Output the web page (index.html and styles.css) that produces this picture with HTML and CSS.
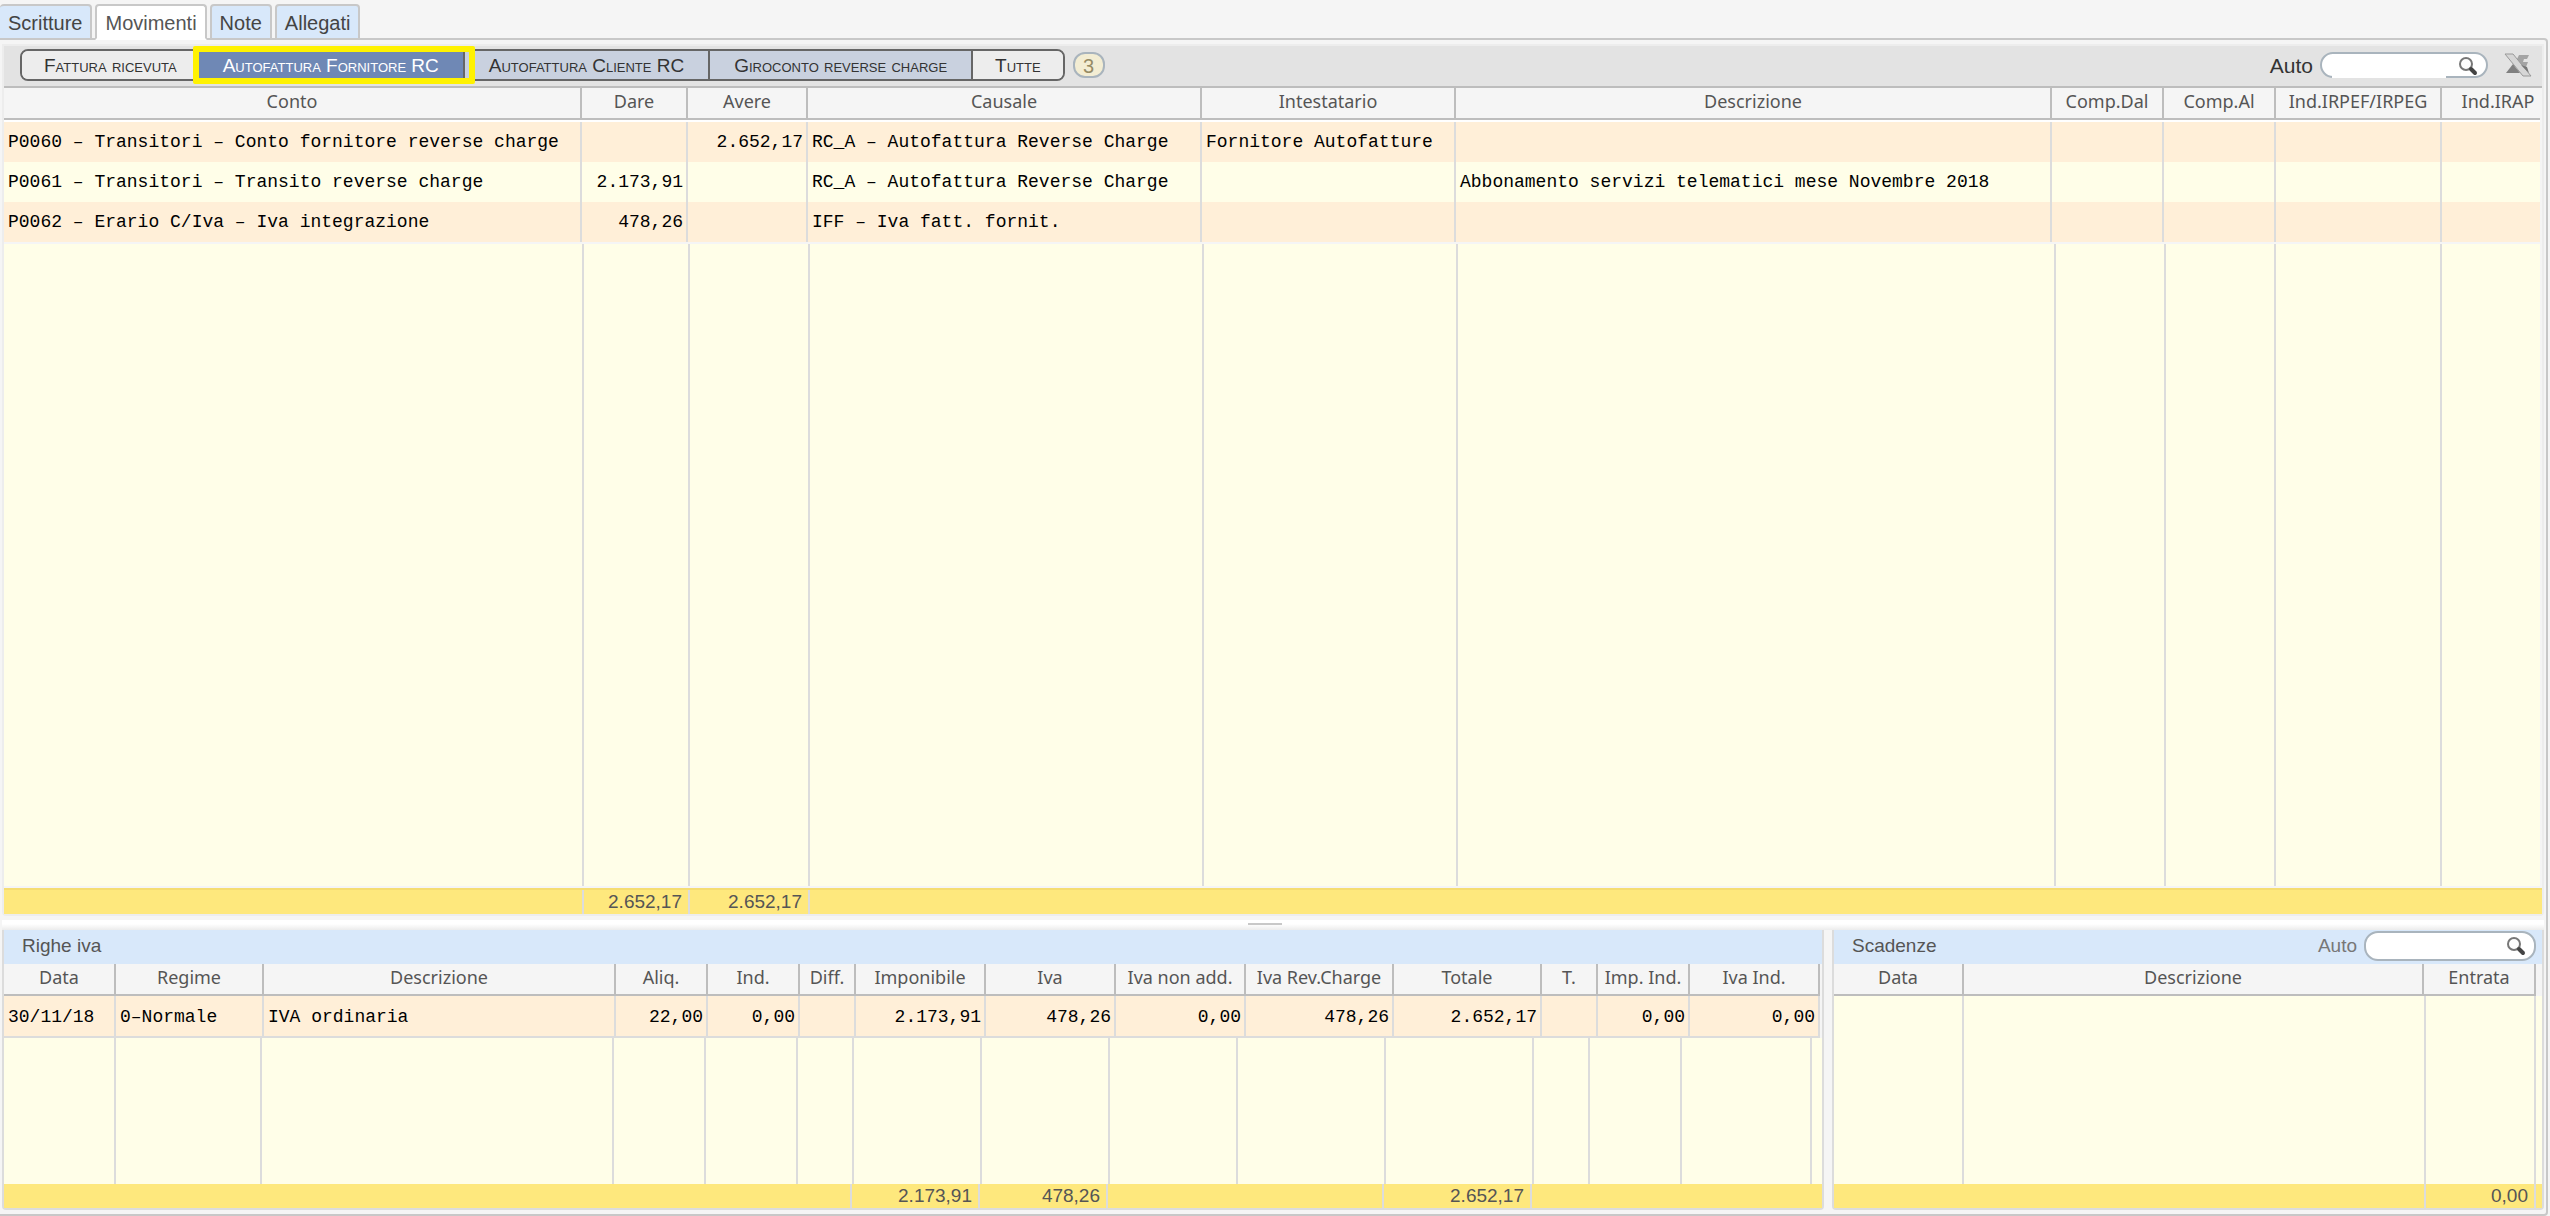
FILE: index.html
```
<!DOCTYPE html>
<html lang="it">
<head>
    <meta charset="UTF-8">
    <meta name="viewport" content="width=device-width, initial-scale=1.0">
    <title>Movimenti</title>
    <link rel="stylesheet" href="styles.css">
</head>
<body>
    <!-- Schede principali -->
    <nav class="tabs">
        <button type="button" class="tab">Scritture</button>
        <button type="button" class="tab active">Movimenti</button>
        <button type="button" class="tab">Note</button>
        <button type="button" class="tab">Allegati</button>
    </nav>

    <main class="frame">
        <!-- Griglia movimenti -->
        <section class="panel movimenti">
            <div class="toolbar">
                <div class="filters">
                    <button type="button" class="filter">Fattura ricevuta</button>
                    <button type="button" class="filter selected">Autofattura Fornitore RC</button>
                    <button type="button" class="filter linked">Autofattura Cliente RC</button>
                    <button type="button" class="filter linked">Giroconto reverse charge</button>
                    <button type="button" class="filter">Tutte</button>
                </div>
                <span class="count">3</span>
                <div class="search-group">
                    <label for="cercaMovimenti">Auto</label>
                    <div class="search open">
                        <input type="text" id="cercaMovimenti">
                        <svg class="lens" viewBox="0 0 20 20">
                            <circle cx="8" cy="8" r="6" fill="#fdfdfd" stroke="#777" stroke-width="2"/>
                            <path d="M13 13 L17 17" stroke="#444" stroke-width="4" stroke-linecap="round"/>
                        </svg>
                    </div>
                    <button type="button" class="export" aria-label="Esporta in Excel">
                        <svg viewBox="0 0 28 24">
                            <path d="M2 20 L9 11 L16 20 Z" fill="#808080"/>
                            <path d="M15 2 H25 L23 6 H20 L19 9 H24 L22 14 H16 L12 8 Z" fill="#a4a4a4"/>
                            <path d="M1 1 H9 L27 23 H19 Z" fill="#d6d6d6" stroke="#999"/>
                            <path d="M17 12 L23 14 L25 20 Z" fill="#777"/>
                        </svg>
                    </button>
                </div>
            </div>
            <table class="grid">
                <colgroup>
                    <col class="w-conto"><col class="w-dare"><col class="w-avere"><col class="w-causale"><col class="w-intestatario"><col><col class="w-comp"><col class="w-comp"><col class="w-irpef"><col class="w-irap">
                </colgroup>
                <thead>
                    <tr>
                        <th>Conto</th><th>Dare</th><th>Avere</th><th>Causale</th><th>Intestatario</th><th>Descrizione</th><th>Comp.Dal</th><th>Comp.Al</th><th>Ind.IRPEF/IRPEG</th><th class="irap">Ind.IRAP</th>
                    </tr>
                </thead>
                <tbody>
                    <tr>
                        <td>P0060 – Transitori – Conto fornitore reverse charge</td><td></td><td class="num">2.652,17</td><td>RC_A – Autofattura Reverse Charge</td><td>Fornitore Autofatture</td><td></td><td></td><td></td><td></td><td></td>
                    </tr>
                    <tr>
                        <td>P0061 – Transitori – Transito reverse charge</td><td class="num">2.173,91</td><td></td><td>RC_A – Autofattura Reverse Charge</td><td></td><td>Abbonamento servizi telematici mese Novembre 2018</td><td></td><td></td><td></td><td></td>
                    </tr>
                    <tr>
                        <td>P0062 – Erario C/Iva – Iva integrazione</td><td class="num">478,26</td><td></td><td>IFF – Iva fatt. fornit.</td><td></td><td></td><td></td><td></td><td></td><td></td>
                    </tr>
                </tbody>
            </table>
            <div class="empty">
                <i></i><i></i><i></i><i></i><i></i><i></i><i></i><i></i><i></i><i></i>
            </div>
            <div class="totals">
                <span></span><span>2.652,17</span><span>2.652,17</span>
            </div>
        </section>

        <div class="splitter"></div>

        <div class="lower">
            <!-- Righe iva -->
            <section class="panel righe">
                <header class="title"><h2>Righe iva</h2></header>
                <table class="grid">
                    <colgroup>
                        <col class="w-data"><col class="w-regime"><col><col class="w-aliq"><col class="w-aliq"><col class="w-diff"><col class="w-importo"><col class="w-importo"><col class="w-importo"><col class="w-totale"><col class="w-totale"><col class="w-diff"><col class="w-aliq"><col class="w-importo">
                    </colgroup>
                    <thead>
                        <tr>
                            <th>Data</th><th>Regime</th><th>Descrizione</th><th>Aliq.</th><th>Ind.</th><th>Diff.</th><th>Imponibile</th><th>Iva</th><th>Iva non add.</th><th>Iva Rev.Charge</th><th>Totale</th><th>T.</th><th>Imp. Ind.</th><th>Iva Ind.</th>
                        </tr>
                    </thead>
                    <tbody>
                        <tr>
                            <td>30/11/18</td><td>0–Normale</td><td>IVA ordinaria</td><td class="num">22,00</td><td class="num">0,00</td><td></td><td class="num">2.173,91</td><td class="num">478,26</td><td class="num">0,00</td><td class="num">478,26</td><td class="num">2.652,17</td><td></td><td class="num">0,00</td><td class="num">0,00</td>
                        </tr>
                    </tbody>
                </table>
                <div class="empty">
                    <i></i><i></i><i></i><i></i><i></i><i></i><i></i><i></i><i></i><i></i><i></i><i></i><i></i><i></i>
                </div>
                <div class="totals">
                    <span></span><span>2.173,91</span><span>478,26</span><span></span><span>2.652,17</span>
                </div>
            </section>

            <!-- Scadenze -->
            <section class="panel scadenze">
                <header class="title">
                    <h2>Scadenze</h2>
                    <div class="search-group">
                        <label for="cercaScadenze">Auto</label>
                        <div class="search">
                            <input type="text" id="cercaScadenze">
                            <svg class="lens" viewBox="0 0 20 20">
                                <circle cx="8" cy="8" r="6" fill="#fdfdfd" stroke="#777" stroke-width="2"/>
                                <path d="M13 13 L17 17" stroke="#444" stroke-width="4" stroke-linecap="round"/>
                            </svg>
                        </div>
                    </div>
                </header>
                <table class="grid">
                    <colgroup>
                        <col class="w-scadenza"><col><col class="w-entrata">
                    </colgroup>
                    <thead>
                        <tr><th>Data</th><th>Descrizione</th><th>Entrata</th></tr>
                    </thead>
                </table>
                <div class="empty"><i></i><i></i><i></i></div>
                <div class="totals"><span></span><span>0,00</span></div>
            </section>
        </div>
    </main>
</body>
</html>
```
FILE: styles.css
```
* {
    box-sizing: border-box;
}
body {
    display: flex;
    flex-direction: column;
    min-height: 100vh;
    margin: 0;
    background: #f5f5f5;
    color: #555;
    font-family: "Liberation Sans", Arial, sans-serif;
    font-size: 19px;
}
button {
    padding: 0;
    font-family: inherit;
    cursor: pointer;
}

/* Schede */
.tabs {
    position: relative;
    z-index: 1;
    display: flex;
    gap: 3px;
    margin-bottom: -2px;
    padding-top: 4px;
}
.tab {
    height: 36px;
    padding: 2px 8px 0;
    border: 2px solid #c8c8c8;
    border-radius: 4px 4px 0 0;
    background: #d8e8fa;
    color: #444;
    font-size: 20px;
}
.tab:first-child {
    border-left: 0;
}
.tab.active {
    border-bottom-color: #fff;
    background: #fff;
    color: #555;
}

/* Cornice */
.frame {
    display: flex;
    flex: 1;
    flex-direction: column;
    margin-right: 2px;
    padding: 4px 2px;
    border: 2px solid #c8c8c8;
    border-left: 0;
    border-radius: 0 4px 4px 0;
}
.panel {
    display: flex;
    flex-direction: column;
    min-width: 0;
    border: 2px solid #dcdcdc;
    border-radius: 0 0 4px 4px;
}
.movimenti {
    flex: 1;
    border-color: #ededed;
}

/* Barra filtri */
.toolbar {
    display: flex;
    align-items: center;
    height: 42px;
    padding: 0 10px 2px 16px;
    border-bottom: 2px solid #bdbdbd;
    background: #e3e3e3;
}
.filters {
    display: flex;
    height: 32px;
    border: 2px solid #666;
    border-radius: 8px;
}
.filter {
    position: relative;
    padding: 2px 24px 0;
    border: 0;
    border-right: 2px solid #666;
    background: #ededed;
    color: #333;
    font-size: 19px;
    font-variant: small-caps;
}
.filter:first-child {
    padding: 2px 22px 0;
    border-right: 0;
    border-radius: 6px 0 0 6px;
}
.filter:last-child {
    padding: 2px 22px 0;
    border-right: 0;
    border-radius: 0 6px 6px 0;
}
.filter.linked {
    background: #c9d1df;
}
.filter.selected {
    background: #6f88b5;
    color: #fff;
}
/* Evidenzia il filtro attivo */
.filter.selected::after {
    content: "";
    position: absolute;
    z-index: 1;
    inset: -5px -12px -5px -6px;
    border: 6px solid #fff200;
    border-radius: 2px;
}
.count {
    width: 32px;
    height: 26px;
    margin-left: 8px;
    border: 2px solid #a9b4bd;
    border-radius: 12px;
    background: #f3edd3;
    color: #968b65;
    font-size: 20px;
    line-height: 24px;
    text-align: center;
}
.search-group {
    display: flex;
    align-items: center;
    gap: 7px;
    margin-left: auto;
}
.toolbar label {
    padding-top: 2px;
    color: #333;
    font-size: 21px;
}
.title label {
    color: #777;
}
.search {
    display: flex;
    align-items: center;
    width: 168px;
    height: 26px;
    padding: 0 8px 0 10px;
    border: 2px solid #a9b4bd;
    border-radius: 14px;
    background: #fff;
}
.search input {
    flex: 1;
    min-width: 0;
    height: 22px;
    padding: 0;
    border: 0;
    background: #fff;
    outline: none;
}
.search.open input {
    align-self: flex-start;
    height: 24px;
    margin-right: 12px;
}
.lens {
    width: 20px;
    height: 20px;
}
.search.open .lens {
    align-self: flex-end;
}
.export {
    width: 28px;
    height: 24px;
    margin-left: 9px;
    border: 0;
    background: none;
}
.export svg {
    display: block;
}

/* Griglie */
.grid {
    width: 100%;
    border-collapse: separate;
    border-spacing: 0;
    table-layout: fixed;
    white-space: nowrap;
}
.grid th {
    height: 32px;
    padding: 0 0 4px;
    border-right: 2px solid #bdbdbd;
    border-bottom: 2px solid #bdbdbd;
    background: #f5f5f5;
    font-family: "Noto Sans", sans-serif;
    font-size: 18px;
    font-weight: normal;
    line-height: 26px;
}
.grid td {
    height: 40px;
    padding: 0 3px 0 4px;
    border-right: 2px solid #dcdcdc;
    background: #fffee8;
    color: #000;
    font-family: "Liberation Mono", "Courier New", monospace;
    font-size: 18px;
}
.grid tbody tr:nth-child(odd) td {
    background: #ffefd8;
}
.grid td.num {
    text-align: right;
}
.movimenti .grid,
.movimenti .empty {
    width: calc(100% - 2px);
}
.movimenti thead th {
    box-shadow: 0 2px #fff;
}
.movimenti tbody::before {
    content: "";
    display: table-row;
    height: 2px;
}
.movimenti th:last-child,
.movimenti td:last-child {
    border-right: 0;
}
.movimenti th.irap {
    padding-left: 14px;
}
.righe .grid {
    width: calc(100% - 2px);
}
.righe td {
    height: 42px;
    padding-top: 2px;
    border-bottom: 2px solid #dcdcdc;
}
.scadenze .grid {
    width: calc(100% - 6px);
}
.empty {
    display: grid;
    flex: 1;
    background: #fffee8;
}
.empty i {
    border-right: 2px solid #dcdcdc;
}
.totals {
    display: grid;
    height: 24px;
    background: #fee87d;
}
.totals span {
    padding-right: 6px;
    border-right: 2px solid #dcdcdc;
    line-height: 24px;
    text-align: right;
}

.movimenti .empty {
    grid-template-columns: 580px 106px 120px 394px 254px 1fr 110px 110px 166px 98px;
    margin: 2px 0;
}
.movimenti .empty i:last-child {
    border-right: 0;
}
.movimenti .totals {
    grid-template-columns: 580px 106px 120px;
    height: 26px;
    border-top: 2px solid #f5dd72;
}
.righe .empty {
    grid-template-columns: 112px 146px 1fr 92px 92px 56px 128px 128px 128px 148px 148px 56px 92px 130px;
    min-height: 146px;
    padding-right: 10px;
}
.righe .totals {
    grid-template-columns: 1fr 128px 128px 276px 148px;
    padding-right: 290px;
}
.scadenze .empty {
    grid-template-columns: 130px 1fr 110px;
    padding-right: 6px;
}
.scadenze .totals {
    grid-template-columns: 1fr 110px;
    padding-right: 6px;
}

.w-conto { width: 578px; }
.w-dare { width: 106px; }
.w-avere { width: 120px; }
.w-causale { width: 394px; }
.w-intestatario { width: 254px; }
.w-comp { width: 112px; }
.w-irpef { width: 166px; }
.w-irap { width: 98px; }
.w-data { width: 112px; }
.w-regime { width: 148px; }
.w-aliq { width: 92px; }
.w-diff { width: 56px; }
.w-importo { width: 130px; }
.w-totale { width: 148px; }
.w-scadenza { width: 130px; }
.w-entrata { width: 112px; }

/* Pannelli inferiori */
.splitter {
    display: flex;
    justify-content: center;
    height: 14px;
    padding: 7px 16px 0 0;
    background: linear-gradient(#f5f5f5 4px, #fff 4px, #fff 8px, #ececec);
}
.splitter::before {
    content: "";
    width: 34px;
    height: 2px;
    background: #c8c8c8;
}
.lower {
    display: grid;
    grid-template-columns: 1822fr 712fr;
    gap: 8px;
}
.lower .panel {
    border-top: 0;
}
.title {
    display: flex;
    align-items: center;
    height: 34px;
    padding: 0 6px 2px 18px;
    background: #d8e8fa;
}
.title h2 {
    margin: 0;
    font-size: 19px;
    font-weight: normal;
}
.title .search {
    width: 172px;
    height: 30px;
}
```
